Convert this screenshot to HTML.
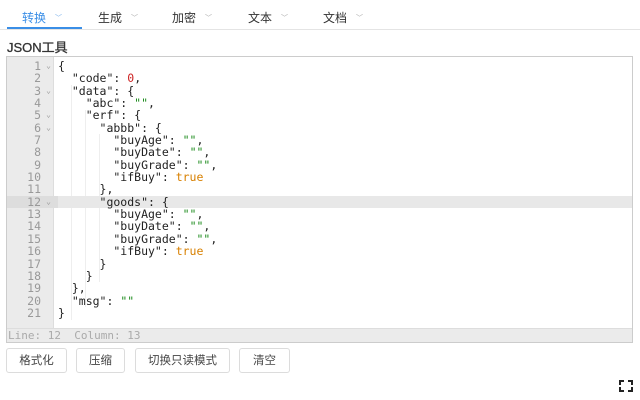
<!DOCTYPE html><html><head><style>
body{margin:0;width:640px;height:400px;background:#fff;font-family:"Liberation Sans","Noto Sans CJK SC",sans-serif;position:relative;overflow:hidden}
.tabs{position:absolute;top:0;left:0;width:640px;height:29px;border-bottom:1px solid #e4e4e4}
.tab{position:absolute;top:9px;font-size:12px;color:#333}
.tab span{color:#aaa;font-size:7px;margin-left:9px;vertical-align:2px}
.ul{position:absolute;left:7px;top:27px;width:75px;height:2px;background:#3a8ee6}
h1{position:absolute;left:7px;top:37px;margin:0;font-size:13px;font-weight:normal;color:#333;-webkit-text-stroke:0.3px #333}
.ed{position:absolute;left:6px;top:56px;width:627px;height:287px;border:1px solid #ccc;box-sizing:border-box;background:#fff}
.gut{position:absolute;left:0;top:0;width:46px;height:272px;background:#ebebeb;border-right:1px solid #ddd}
.code{position:absolute;left:0;top:3px;width:625px;font-family:"DejaVu Sans Mono",monospace;font-size:11.5px;line-height:12.35px;white-space:pre;color:#222}
.ln{display:inline-block;width:34px;text-align:right;color:#999;padding-right:17px;position:relative}
.ln i{position:absolute;right:7px;font-style:normal;font-size:8px;top:0}
.hl{background:#e8e8e8}
.s{color:#1a8a1a}.n{color:#c22}.b{color:#d88000}
.st{position:absolute;left:0;bottom:0;width:625px;height:14px;background:#ebebeb;border-top:1px solid #ddd;font-family:"DejaVu Sans Mono",monospace;font-size:11px;color:#aaa;line-height:14px;padding-left:1px;box-sizing:border-box;white-space:pre}
.btn{position:absolute;top:348px;height:25px;border:1px solid #dcdcdc;border-radius:3px;font-size:11.5px;color:#444;text-align:center;line-height:24px;box-sizing:border-box}
.g{position:absolute;top:0;height:260px;border-left:1px solid #eee}
</style></head><body>
<div class="tabs">
<div class="tab" style="left:22px;color:#3a8ee6">转换<span style="color:#7ab0ea">﹀</span></div>
<div class="tab" style="left:98px">生成<span>﹀</span></div>
<div class="tab" style="left:172px">加密<span>﹀</span></div>
<div class="tab" style="left:248px">文本<span>﹀</span></div>
<div class="tab" style="left:323px">文档<span>﹀</span></div>
<div class="ul"></div></div>
<h1>JSON工具</h1>
<div class="ed"><div class="gut"></div>
<div class="g" style="left:64px;top:28px;height:235px"></div>
<div class="g" style="left:78px;top:53px;height:197px"></div>
<div class="g" style="left:92px;top:77px;height:148px"></div>
<div class="code"><div><span class="ln">1<i>⌄</i></span>{</div><div><span class="ln">2</span>  "code": <span class="n">0</span>,</div><div><span class="ln">3<i>⌄</i></span>  "data": {</div><div><span class="ln">4</span>    "abc": <span class="s">""</span>,</div><div><span class="ln">5<i>⌄</i></span>    "erf": {</div><div><span class="ln">6<i>⌄</i></span>      "abbb": {</div><div><span class="ln">7</span>        "buyAge": <span class="s">""</span>,</div><div><span class="ln">8</span>        "buyDate": <span class="s">""</span>,</div><div><span class="ln">9</span>        "buyGrade": <span class="s">""</span>,</div><div><span class="ln">10</span>        "ifBuy": <span class="b">true</span></div><div><span class="ln">11</span>      },</div><div class="hl"><span class="ln" style="background:#ddd;width:34px">12<i>⌄</i></span>      "goods": {</div><div><span class="ln">13</span>        "buyAge": <span class="s">""</span>,</div><div><span class="ln">14</span>        "buyDate": <span class="s">""</span>,</div><div><span class="ln">15</span>        "buyGrade": <span class="s">""</span>,</div><div><span class="ln">16</span>        "ifBuy": <span class="b">true</span></div><div><span class="ln">17</span>      }</div><div><span class="ln">18</span>    }</div><div><span class="ln">19</span>  },</div><div><span class="ln">20</span>  "msg": <span class="s">""</span></div><div><span class="ln">21</span>}</div></div>
<div class="st">Line: 12  Column: 13</div></div>
<div class="btn" style="left:6px;width:61px">格式化</div>
<div class="btn" style="left:76px;width:49px">压缩</div>
<div class="btn" style="left:135px;width:95px">切换只读模式</div>
<div class="btn" style="left:239px;width:51px">清空</div>
<svg style="position:absolute;left:619px;top:380px" width="14" height="12" viewBox="0 0 14 12" fill="none" stroke="#222" stroke-width="2"><path d="M1 5V1h4M9 1h4v4M13 7v4H9M5 11H1V7"/></svg>
</body></html>
